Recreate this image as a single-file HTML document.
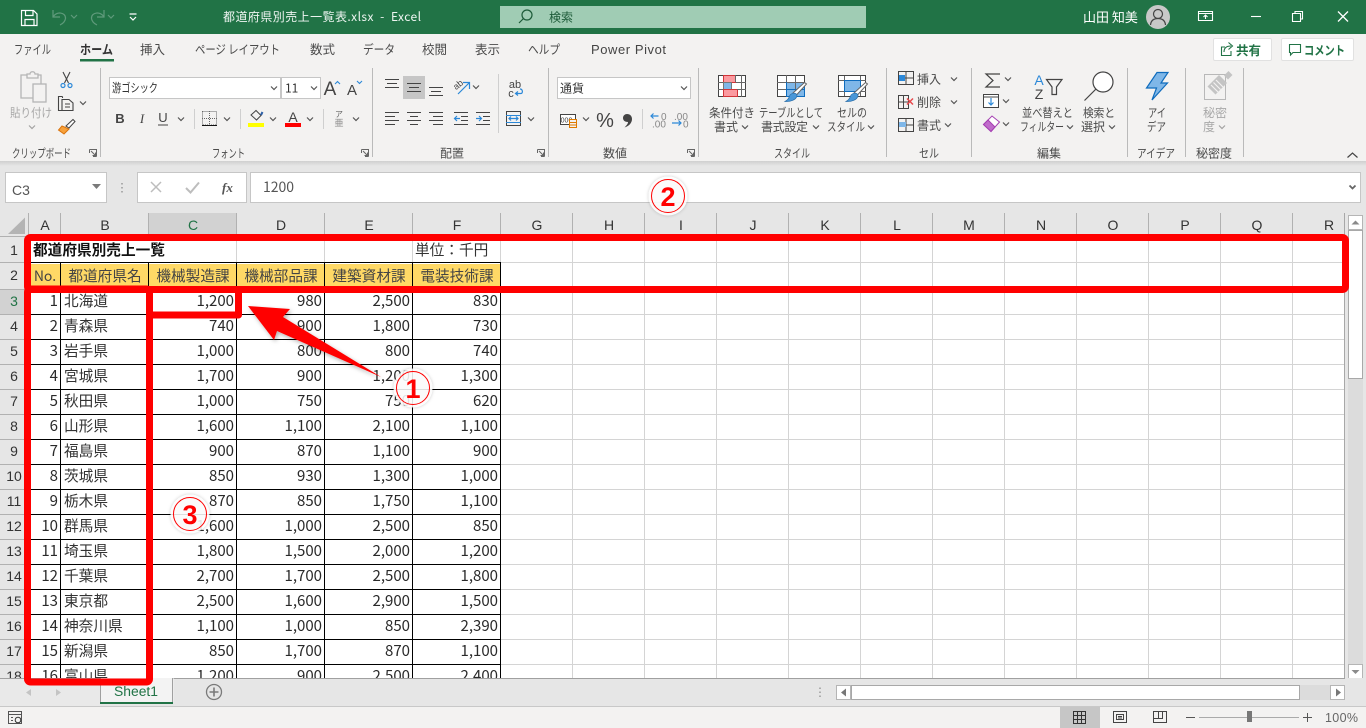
<!DOCTYPE html>
<html lang="ja"><head><meta charset="utf-8"><title>都道府県別売上一覧表.xlsx - Excel</title>
<style>
html,body{margin:0;padding:0;width:1366px;height:728px;overflow:hidden;background:#e6e6e6}
svg{position:absolute;left:0;top:0;display:block}
text{font-family:"Noto Sans CJK JP","Liberation Sans",sans-serif}
.u{font-size:12px;fill:#4a4a4a}
.g{font-size:12px;fill:#a8a8a8}
.tab{font-size:12.5px;fill:#4a4a4a}
.c{font-size:14.67px;fill:#333}
.n{font-size:15px;fill:#2a2a2a;text-anchor:end}
.h{font-size:14.67px;fill:#444;text-anchor:middle}
.ch{font-size:14px;fill:#333;text-anchor:middle;font-family:"Liberation Sans",sans-serif}
.i{fill:none;stroke:#444;stroke-width:1.1}
.cv{fill:none;stroke:#555;stroke-width:1.2}
.bl{fill:none;stroke:#2b88d8;stroke-width:1.2}
.crisp{shape-rendering:crispEdges}
</style></head><body>
<svg width="1366" height="728" viewBox="0 0 1366 728" xmlns="http://www.w3.org/2000/svg">
<defs>
<path id="v" class="cv" d="M-3-1.5 0 1.5 3-1.5"/>
<filter id="sh" x="-20%" y="-20%" width="150%" height="150%"><feDropShadow dx="1.5" dy="2" stdDeviation="2" flood-color="#000" flood-opacity=".3"/></filter>
<filter id="gl" x="-30%" y="-30%" width="160%" height="160%"><feDropShadow dx="0" dy="0" stdDeviation="1.500" flood-color="#000" flood-opacity=".25"/></filter>
<linearGradient id="rs" x1="0" y1="0" x2="0" y2="1"><stop offset="0" stop-color="#cfcfcf"/><stop offset="1" stop-color="#e6e6e6"/></linearGradient>
</defs>

<!-- base -->
<rect width="1366" height="728" fill="#e6e6e6"/>
<!-- title bar -->
<rect width="1366" height="34" fill="#217346"/>
<g fill="none" stroke="#fff" stroke-width="1.2">
<path d="M21.5 10.5H33.5L37 14V25.5H21.5Z"/><path d="M25.5 10.5V15.5H33V10.5M25 25.5V19.5H34V25.5"/>
</g>
<g fill="none" stroke="#5f9a7b" stroke-width="1.2">
<path d="M53 10V17H60M53 17C56 11 66 12 65.500 18.500C65 22 62 24 60 25"/>
<path d="M71 15 74 18 77 15"/>
<path d="M104 10V17H97M104 17C101 11 91 12 91.500 18.500C92 22 95 24 97 25"/>
<path d="M108 15 111 18 114 15"/>
</g>
<path d="M129.500 14H136.500M130 17 133 20 136 17" fill="none" stroke="#fff" stroke-width="1.2"/>
<text x="223" y="21" font-size="12" fill="#eef5f1" textLength="198" lengthAdjust="spacing" xml:space="preserve">都道府県別売上一覧表.xlsx  -  Excel</text>
<rect x="500" y="6" width="366" height="22" fill="#a0ccb4"/>
<g fill="none" stroke="#1c5a38" stroke-width="1.2"><circle cx="527" cy="15" r="5"/><path d="M523.500 18.500 519 23"/></g>
<text x="549" y="21.500" font-size="12" fill="#1c5a38">検索</text>
<text x="1083" y="22" font-size="13" fill="#fff">山田 知美</text>
<circle cx="1158" cy="17" r="12" fill="#c8c8c8"/>
<g fill="none" stroke="#444" stroke-width="1.200"><circle cx="1158" cy="14" r="4.500"/><path d="M1150.500 25C1151 20 1154 18.500 1158 18.500S1165 20 1165.500 25"/></g>
<g fill="none" stroke="#fff" stroke-width="1.100">
<path d="M1198.500 11.500H1212.500V20.500H1198.500ZM1198.500 13.500H1212.500M1205.500 19V15M1203.500 17 1205.500 15 1207.500 17"/>
<path d="M1246 16.500H1256" transform="translate(5 0)"/>
<path d="M1292.500 13.500H1300.500V21.500H1292.500ZM1295 13V11.500H1302.500V19H1300.500"/>
<path d="M1338 11.500 1348 21.500M1348 11.500 1338 21.500" stroke-width="1.300"/>
</g>

<!-- ribbon -->
<rect y="34" width="1366" height="127" fill="#f3f2f1"/>
<rect y="161" width="1366" height="5" fill="url(#rs)"/>
<g class="tab">
<text class="tab" x="14" y="54" textLength="37" lengthAdjust="spacingAndGlyphs">ファイル</text>
<text x="80" y="54" font-size="12.500" font-weight="700" fill="#333" textLength="33" lengthAdjust="spacingAndGlyphs">ホーム</text>
<text class="tab" x="140" y="54">挿入</text>
<text class="tab" x="195" y="54" textLength="85" lengthAdjust="spacingAndGlyphs">ページ レイアウト</text>
<text class="tab" x="310" y="54">数式</text>
<text class="tab" x="363" y="54" textLength="32" lengthAdjust="spacingAndGlyphs">データ</text>
<text class="tab" x="422" y="54">校閲</text>
<text class="tab" x="475" y="54">表示</text>
<text class="tab" x="528" y="54" textLength="32" lengthAdjust="spacingAndGlyphs">ヘルプ</text>
<text x="591" y="54" font-size="13" fill="#444" style="font-family:'Liberation Sans',sans-serif" textLength="75">Power Pivot</text>
</g>
<rect x="80" y="59" width="34" height="2.500" fill="#217346"/>
<!-- share/comment -->
<rect x="1213.500" y="38.500" width="58" height="22" rx="1.500" fill="#fff" stroke="#e1e1e1"/>
<rect x="1281.500" y="38.500" width="72" height="22" rx="1.500" fill="#fff" stroke="#e1e1e1"/>
<g fill="none" stroke="#217346" stroke-width="1.100">
<path d="M1225 47H1221.500V55.500H1231V51M1224 52C1224 47.500 1227 46 1231 46M1228.500 42.500 1232.500 46 1228.500 49.500"/>
<path d="M1289.500 44.500H1300.500V52.500H1293L1290.500 55V52.500H1289.500Z"/>
</g>
<text x="1236" y="55" font-size="12.500" font-weight="700" fill="#217346">共有</text>
<text x="1304" y="55" font-size="12.500" font-weight="700" fill="#217346" textLength="41" lengthAdjust="spacingAndGlyphs">コメント</text>

<!-- ribbon separators -->
<path class="crisp" d="M100.500 68V157M372.500 68V157M548.500 68V157M698.500 68V157M886.500 68V157M971.500 68V157M1127.500 68V157M1185.500 68V157M1243.500 68V157" stroke="#bababa" fill="none"/>
<path class="crisp" d="M194.500 109V129M240.500 109V129M323.500 109V129M498.500 74V133M642.500 109V129" stroke="#cfcfcf" fill="none"/>

<!-- group labels -->
<text class="u" x="12" y="157.500" textLength="59" lengthAdjust="spacingAndGlyphs">クリップボード</text>
<text class="u" x="212" y="157.500" textLength="33" lengthAdjust="spacingAndGlyphs">フォント</text>
<text class="u" x="440" y="157.500">配置</text>
<text class="u" x="603" y="157.500">数値</text>
<text class="u" x="774" y="157.500" textLength="36" lengthAdjust="spacingAndGlyphs">スタイル</text>
<text class="u" x="919" y="157.500" textLength="20" lengthAdjust="spacingAndGlyphs">セル</text>
<text class="u" x="1037" y="157.500">編集</text>
<text class="u" x="1137" y="157.500" textLength="38" lengthAdjust="spacingAndGlyphs">アイデア</text>
<text class="u" x="1196" y="157.500">秘密度</text>
<g fill="none" stroke="#666" stroke-width="1">
<path id="dl" d="M89.500 149.500H96.500V156.500M89.500 149.500V153M93 156.500H96.500M91 151 95.500 155.500M95.500 152.500V155.500H92.500"/>
<use href="#dl" x="272"/><use href="#dl" x="448"/><use href="#dl" x="598"/>
</g>

<!-- clipboard -->
<g fill="none" stroke="#b5b5b5" stroke-width="1.300">
<path d="M38 75H41V98H21V75H27"/><path d="M27 76V74H30C30 71 35 71 35 74H38V78H27Z"/>
<rect x="33" y="84" width="13" height="18" fill="#f3f2f1"/>
</g>
<text class="g" x="10" y="117" textLength="42" lengthAdjust="spacingAndGlyphs">貼り付け</text>
<use href="#v" x="32" y="127" style="opacity:.5"/>
<g fill="none" stroke="#444" stroke-width="1.100"><path d="M63 72 68.500 83M70 72 64.500 83"/></g>
<g fill="none" stroke="#2b88d8" stroke-width="1.200"><circle cx="63" cy="85.500" r="2"/><circle cx="70" cy="85.500" r="2"/></g>
<g class="i"><path class="i" d="M62.500 96.500H58.500V110.500H62M62.500 96.500V98M62 99.500H69L73 103V110.500H62Z"/><path class="i" d="M65 104H70M65 107H70"/></g>
<use href="#v" x="83" y="103"/>
<path d="M62 126 58.500 130 64 134 69 129Z" fill="#f7a13b" stroke="#d9730d"/><path d="M66 126 73 119.500 75 121.500 69 128Z" fill="#fff" stroke="#444"/>

<!-- font -->
<rect x="109.500" y="77.500" width="171" height="21" fill="#fff" stroke="#c6c6c6"/>
<rect x="281.500" y="77.500" width="39" height="21" fill="#fff" stroke="#c6c6c6"/>
<text x="112" y="92" font-size="12" fill="#333" textLength="46" lengthAdjust="spacingAndGlyphs">游ゴシック</text>
<text x="285" y="92.500" font-size="12" fill="#333">11</text>
<use href="#v" x="274" y="88"/><use href="#v" x="314" y="88"/>
<text x="330" y="95" font-size="19" fill="#444" text-anchor="middle" style="font-family:'Liberation Sans',sans-serif">A</text>
<text x="352" y="95" font-size="15" fill="#444" text-anchor="middle" style="font-family:'Liberation Sans',sans-serif">A</text>
<path d="M335 84 337.500 81.500 340 84M357 81 359.500 83.500 362 81" fill="none" stroke="#2b88d8" stroke-width="1.100"/>
<text x="120" y="123" font-size="13" font-weight="700" fill="#444" text-anchor="middle" style="font-family:'Liberation Sans',sans-serif">B</text>
<text x="142" y="123" font-size="13" font-style="italic" fill="#444" text-anchor="middle" style="font-family:'Liberation Serif',serif">I</text>
<text x="163" y="122" font-size="13" fill="#444" text-anchor="middle" style="font-family:'Liberation Sans',sans-serif">U</text>
<path d="M158 125H168" stroke="#444" fill="none"/>
<use href="#v" x="181" y="119"/>
<path class="crisp" d="M202.500 111.500H216.500V125H202.500ZM209.500 111V125M202 118.500H217" fill="none" stroke="#666" stroke-dasharray="1 1"/>
<path class="crisp" d="M202 125.500H217" stroke="#111" fill="none"/>
<use href="#v" x="227" y="119"/>
<path d="M251 115 256 110.500 261 115.500 256.500 120Z" fill="none" stroke="#444"/><path d="M261 115 262.500 112" stroke="#2b5fa8" stroke-width="2" fill="none"/>
<rect x="248" y="123" width="16" height="4" fill="#ff0"/>
<use href="#v" x="273" y="119"/>
<text x="293" y="122" font-size="14" fill="#444" text-anchor="middle" style="font-family:'Liberation Sans',sans-serif">A</text>
<rect x="285" y="123" width="16" height="4" fill="#f00"/>
<use href="#v" x="310" y="119"/>
<text x="339" y="117" font-size="8" fill="#666" text-anchor="middle">ア</text>
<text x="339" y="126" font-size="9" fill="#888" text-anchor="middle">亜</text>
<use href="#v" x="356" y="119"/>

<!-- alignment -->
<rect x="403" y="76" width="22" height="23" fill="#c6c6c6"/>
<path class="crisp" d="M385 79.500H399M387 83.500H397M385 87.500H399
M407 83.500H421M409 87.500H419M407 91.500H421
M429 87.500H443M431 91.500H441M429 95.500H443
M385 112.500H399M385 116.500H395M385 120.500H399M385 124.500H395
M407 112.500H421M410 116.500H418M407 120.500H421M410 124.500H418
M429 112.500H443M433 116.500H443M429 120.500H443M433 124.500H443
M461 116.500H468M461 120.500H468M454 112.500H468M454 124.500H468
M483 116.500H490M483 120.500H490M476 112.500H490M476 124.500H490" fill="none" stroke="#444"/>
<path d="M460 118.500H454.500M457 116 454.500 118.500 457 121M476 118.500H481.500M479 116 481.500 118.500 479 121" class="bl"/>
<path d="M469 83 458 94M463 82.500H469.500V89" class="bl"/>
<text x="460" y="87" font-size="9" fill="#444" text-anchor="middle" transform="rotate(-40 460 87)" style="font-family:'Liberation Sans',sans-serif">ab</text>
<use href="#v" x="476" y="87"/>
<text x="515" y="88" font-size="11" fill="#444" text-anchor="middle" style="font-family:'Liberation Sans',sans-serif">ab</text>
<text x="511" y="97" font-size="11" fill="#444" text-anchor="middle" style="font-family:'Liberation Sans',sans-serif">c</text>
<path d="M516 93.500H521C523 93.500 523 89 520 89M518 91.500 515.500 93.500 518 95.500" class="bl"/>
<rect x="506.500" y="111.500" width="14" height="14" fill="none" stroke="#444"/>
<path class="crisp" d="M506 115.500H521M506 122.500H521" stroke="#2b88d8" fill="none"/>
<path d="M509 118.500H518M511 116.500 509 118.500 511 120.500M516 116.500 518 118.500 516 120.500" class="bl" stroke-width="1"/>
<use href="#v" x="531" y="119"/>

<!-- number -->
<rect x="557.500" y="77.500" width="133" height="21" fill="#fff" stroke="#c6c6c6"/>
<text x="560" y="92.500" font-size="12" fill="#333">通貨</text>
<use href="#v" x="684" y="88"/>
<rect x="560.500" y="114.500" width="15" height="10" fill="#fff" stroke="#444"/>
<text x="566.500" y="122.500" font-size="7" fill="#444" text-anchor="middle" style="font-family:'Liberation Sans',sans-serif">000</text>
<path d="M569.500 119.500H576.500V127.500H569.500Z M569.500 122.500H576.500 M569.500 125H576.500" fill="#f3f2f1" stroke="#e07b00"/>
<use href="#v" x="586" y="119"/>
<text x="605" y="127" font-size="20" fill="#444" text-anchor="middle" style="font-family:'Liberation Sans',sans-serif">%</text>
<path d="M627 114C630 114 632 116 632 119 632 123 629 126 624.500 127.500 627 125 628 123.500 628 122 625 122 623 120.500 623 118 623 115.500 625 114 627 114Z" fill="#444"/>
<text x="661" y="120" font-size="10" fill="#888" style="font-family:'Liberation Sans',sans-serif">0</text>
<text x="652" y="127.500" font-size="10" fill="#888" style="font-family:'Liberation Sans',sans-serif">.00</text>
<path d="M658.500 116H651M653.500 113.500 651 116 653.500 118.500" class="bl"/>
<text x="674" y="120" font-size="10" fill="#888" style="font-family:'Liberation Sans',sans-serif">.00</text>
<text x="683" y="127.500" font-size="10" fill="#888" style="font-family:'Liberation Sans',sans-serif">0</text>
<path d="M672 123H681M678.500 120.500 681 123 678.500 125.500" class="bl"/>

<!-- styles -->
<g class="crisp">
<rect x="718.500" y="75.500" width="27" height="21" fill="#fff" stroke="#444"/>
<rect x="723.500" y="75.500" width="12" height="7" fill="#fb9aa0" stroke="#d13438"/>
<rect x="723.500" y="82.500" width="8" height="7" fill="#7fb7e8" stroke="#777"/>
<rect x="723.500" y="89.500" width="14" height="7" fill="#fb9aa0" stroke="#d13438"/>
<path d="M735.500 75V82M741.500 75V97M718 82.500H723M718 89.500H723M736 82.500H746M737 89.500H746" stroke="#666" fill="none"/>
<rect x="777.500" y="75.500" width="27" height="21" fill="#fff" stroke="#444"/>
<rect x="786" y="82" width="19" height="15" fill="#7fb7e8"/>
<path d="M786.500 75V82M795.500 75V97M777 82.500H805M777 89.500H786" stroke="#666" fill="none"/>
<path d="M786 89.500H805M786.500 82V97M786 96.500H805M804.500 82V97" stroke="#0f6cbd" fill="none"/>
<rect x="838.500" y="75.500" width="27" height="21" fill="#fff" stroke="#444"/>
<path d="M838 80.500H866M844.500 76V96M838 91.500H866M860.500 76V96" stroke="#666" fill="none"/>
<rect x="844.500" y="80.500" width="16" height="11" fill="#7fb7e8" stroke="#0f6cbd"/>
</g>
<g fill="#fff" stroke="#666" stroke-width="1">
<path d="M793 93 804.500 82.500 806.500 84 796 95.500Z"/><path d="M854 93 865.500 82.500 867.500 84 857 95.500Z"/>
</g>
<path d="M790 95C793 92 797 93 797 96 796 100 790 102 785 101.500 788 100 789 98 790 95ZM851 95C854 92 858 93 858 96 857 100 851 102 846 101.500 849 100 850 98 851 95Z" fill="#4a97d8" stroke="#2b6ea8" stroke-width=".700"/>
<text class="u" x="709" y="117" textLength="46" lengthAdjust="spacingAndGlyphs">条件付き</text>
<text class="u" x="714" y="131">書式</text><use href="#v" x="745" y="127"/>
<text class="u" x="759" y="117" textLength="64" lengthAdjust="spacingAndGlyphs">テーブルとして</text>
<text class="u" x="761" y="131" textLength="47">書式設定</text><use href="#v" x="816" y="127"/>
<text class="u" x="837" y="117" textLength="30" lengthAdjust="spacingAndGlyphs">セルの</text>
<text class="u" x="827" y="131" textLength="38" lengthAdjust="spacingAndGlyphs">スタイル</text><use href="#v" x="871" y="127"/>

<!-- cells -->
<g class="crisp" fill="none">
<path d="M898.500 71.500H913.500V84.500H898.500ZM898.500 78H913.500M906 71V85" stroke="#444"/>
<rect x="899" y="75" width="6" height="6" fill="#2b88d8"/>
<path d="M898.500 95.500H908.500V108.500H898.500ZM903.500 95V109M898 102H908" stroke="#444"/>
<path d="M898.500 118.500H913.500V131.500H898.500ZM898 125H914M906 118V132" stroke="#444"/>
<rect x="899" y="122" width="7" height="5" fill="#7fb7e8"/>
</g>
<path d="M907 98.500 913 104.500M913 98.500 907 104.500" stroke="#e8484c" stroke-width="1.500" fill="none"/>
<text class="u" x="917" y="83.500">挿入</text><use href="#v" x="954" y="79"/>
<text class="u" x="917" y="106.500">削除</text><use href="#v" x="954" y="102"/>
<text class="u" x="917" y="129.500">書式</text><use href="#v" x="948" y="125"/>

<!-- editing -->
<path d="M1000 74H986L993 80.500 986 87H1000" fill="none" stroke="#444" stroke-width="1.200"/>
<use href="#v" x="1008" y="79"/>
<rect x="983.500" y="94.500" width="15" height="13" fill="#fff" stroke="#444"/>
<path d="M983 97H999" stroke="#444"/>
<path d="M991 98V105M988.500 102.500 991 105 993.500 102.500" class="bl"/>
<use href="#v" x="1006" y="101"/>
<path d="M983.500 124.500 992 116 999.500 122 991 131.500Z" fill="#fff" stroke="#a53fb2"/>
<path d="M983.500 124.500 988 120 995 127 991 131.500Z" fill="#c06ccb" stroke="#a53fb2"/>
<use href="#v" x="1006" y="124"/>
<text x="1039" y="85" font-size="14" fill="#2b88d8" text-anchor="middle" style="font-family:'Liberation Sans',sans-serif">A</text>
<text x="1039" y="99" font-size="14" fill="#444" text-anchor="middle" style="font-family:'Liberation Sans',sans-serif">Z</text>
<path d="M1046.500 79.500H1062L1056.500 87V94.500H1052V87Z" fill="none" stroke="#444" stroke-width="1.200"/>
<circle cx="1103" cy="82" r="10" fill="#fff" stroke="#444" stroke-width="1.200"/><path d="M1096 89 1084.500 100.500" stroke="#444" stroke-width="1.200"/>
<text class="u" x="1022" y="117" textLength="51" lengthAdjust="spacingAndGlyphs">並べ替えと</text>
<text class="u" x="1020" y="131" textLength="44" lengthAdjust="spacingAndGlyphs">フィルター</text><use href="#v" x="1070" y="127"/>
<text class="u" x="1083" y="117" textLength="32" lengthAdjust="spacingAndGlyphs">検索と</text>
<text class="u" x="1081" y="131">選択</text><use href="#v" x="1112" y="127"/>

<!-- ideas / sensitivity -->
<path d="M1157 72.500H1168L1161 83H1167.500L1152 100 1156.500 88H1146.500Z" fill="#7fb7e8" stroke="#0f6cbd" stroke-width="1.200"/>
<text class="u" x="1148" y="117" textLength="18" lengthAdjust="spacingAndGlyphs">アイ</text>
<text class="u" x="1147" y="131" textLength="19" lengthAdjust="spacingAndGlyphs">デア</text>
<rect x="1204.500" y="74.500" width="21" height="25" fill="#f3f2f1" stroke="#b8b8b8"/>
<path d="M1207.500 86.500 1219 75 1227 83 1215.500 94.500Z" fill="#c4c4c4"/>
<path d="M1211 85 1218 92M1213.500 82.500 1220.500 89.500M1216 80 1223 87" stroke="#f3f2f1" stroke-width="1.200" fill="none"/>
<path d="M1224 75.500 1228.500 71 1232.500 75 1228 79.500Z" fill="#c4c4c4"/>
<text class="g" x="1203" y="117">秘密</text><text class="g" x="1203" y="131">度</text><use href="#v" x="1222" y="127" style="opacity:.5"/>
<path d="M1347.500 157.500 1352.500 153 1357.500 157.500" fill="none" stroke="#444" stroke-width="1.200"/>

<!-- formula bar -->
<rect x="5.500" y="172.500" width="101" height="30" fill="#fff" stroke="#c6c6c6"/>
<text x="12" y="195" font-size="14" fill="#555" style="font-family:'Liberation Sans',sans-serif">C3</text>
<path d="M92 184H101L96.500 189Z" fill="#7a7a7a"/>
<path d="M122 183V184.500M122 187V188.500M122 191V192.500" stroke="#999" stroke-width="1.500"/>
<rect x="137.500" y="172.500" width="109" height="30" fill="#fff" stroke="#c6c6c6"/>
<path d="M151 182 161 192M161 182 151 192" stroke="#bdbdbd" stroke-width="1.500" fill="none"/>
<path d="M186 188 190.500 192.500 199 182.500" stroke="#bdbdbd" stroke-width="2" fill="none"/>
<text x="222" y="192" font-size="13" font-style="italic" font-weight="700" fill="#555" style="font-family:'Liberation Serif',serif">fx</text>
<rect x="250.500" y="172.500" width="1110" height="30" fill="#fff" stroke="#c6c6c6"/>
<text x="263" y="192" font-size="14" fill="#555" style="font-family:'Noto Sans CJK JP',sans-serif">1200</text>
<path d="M1349.500 185.500 1352.500 188.500 1355.500 185.500" fill="none" stroke="#666" stroke-width="1.800"/>

<!-- column headers -->
<rect x="149" y="213" width="88" height="24" fill="#d2d2d2"/>
<path d="M8 234 25 217.500V234Z" fill="#b4b4b4"/>
<path class="crisp" d="M28.500 213V237M60.500 213V237M148.500 213V237M236.500 213V237M324.500 213V237M412.500 213V237M500.500 213V237M572.500 213V237M644.500 213V237M716.500 213V237M788.500 213V237M860.500 213V237M932.500 213V237M1004.500 213V237M1076.500 213V237M1148.500 213V237M1220.500 213V237M1292.500 213V237" stroke="#b1b1b1" fill="none"/>
<g>
<text class="ch" x="45" y="230">A</text><text class="ch" x="105" y="230">B</text><text class="ch" x="193" y="230" style="fill:#217346">C</text><text class="ch" x="281" y="230">D</text><text class="ch" x="369" y="230">E</text><text class="ch" x="457" y="230">F</text><text class="ch" x="537" y="230">G</text><text class="ch" x="609" y="230">H</text><text class="ch" x="681" y="230">I</text><text class="ch" x="753" y="230">J</text><text class="ch" x="825" y="230">K</text><text class="ch" x="897" y="230">L</text><text class="ch" x="969" y="230">M</text><text class="ch" x="1041" y="230">N</text><text class="ch" x="1113" y="230">O</text><text class="ch" x="1185" y="230">P</text><text class="ch" x="1257" y="230">Q</text><text class="ch" x="1329" y="230">R</text>
</g>

<!-- sheet -->
<rect x="29" y="237" width="1315" height="441" fill="#fff"/>
<rect x="29" y="264" width="472" height="25" fill="#ffd966"/>
<rect x="0" y="290" width="29" height="24" fill="#d2d2d2"/>
<path class="crisp" d="M0 236.500H29M0 262.500H29M0 289.500H29M0 314.500H29M0 339.500H29M0 364.500H29M0 389.500H29M0 414.500H29M0 439.500H29M0 464.500H29M0 489.500H29M0 514.500H29M0 539.500H29M0 564.500H29M0 589.500H29M0 614.500H29M0 639.500H29M0 664.500H29" stroke="#b1b1b1" fill="none"/>
<path class="crisp" d="M28.500 237V678" stroke="#b1b1b1" fill="none"/>
<path class="crisp" d="M501 262.500H1344M501 289.500H1344M501 314.500H1344M501 339.500H1344M501 364.500H1344M501 389.500H1344M501 414.500H1344M501 439.500H1344M501 464.500H1344M501 489.500H1344M501 514.500H1344M501 539.500H1344M501 564.500H1344M501 589.500H1344M501 614.500H1344M501 639.500H1344M501 664.500H1344
M572.500 237V678M644.500 237V678M716.500 237V678M788.500 237V678M860.500 237V678M932.500 237V678M1004.500 237V678M1076.500 237V678M1148.500 237V678M1220.500 237V678M1292.500 237V678
M236.500 237V262M324.500 237V262M412.500 237V262M500.500 237V262" stroke="#d4d4d4" fill="none"/>
<path class="crisp" d="M29 262.500H501M29 289.500H501M29 314.500H501M29 339.500H501M29 364.500H501M29 389.500H501M29 414.500H501M29 439.500H501M29 464.500H501M29 489.500H501M29 514.500H501M29 539.500H501M29 564.500H501M29 589.500H501M29 614.500H501M29 639.500H501M29 664.500H501
M60.500 262V678M148.500 262V678M236.500 262V678M324.500 262V678M412.500 262V678M500.500 262V678" stroke="#000" fill="none"/>

<!-- row numbers -->
<g>
<text class="ch" x="14" y="255">1</text><text class="ch" x="14" y="280">2</text><text class="ch" x="14" y="306" style="fill:#217346">3</text><text class="ch" x="14" y="331">4</text><text class="ch" x="14" y="356">5</text><text class="ch" x="14" y="381">6</text><text class="ch" x="14" y="406">7</text><text class="ch" x="14" y="431">8</text><text class="ch" x="14" y="456">9</text><text class="ch" x="14" y="481">10</text><text class="ch" x="14" y="506">11</text><text class="ch" x="14" y="531">12</text><text class="ch" x="14" y="556">13</text><text class="ch" x="14" y="581">14</text><text class="ch" x="14" y="606">15</text><text class="ch" x="14" y="631">16</text><text class="ch" x="14" y="656">17</text><text class="ch" x="14" y="681">18</text>
</g>

<!-- cell text -->
<text class="c" x="33" y="255" font-weight="700" style="fill:#111">都道府県別売上一覧</text>
<text class="c" x="415" y="255">単位：千円</text>
<text class="h" x="45" y="281" style="font-size:14px">No.</text><text class="h" x="105" y="281">都道府県名</text><text class="h" x="193" y="281">機械製造課</text><text class="h" x="281" y="281">機械部品課</text><text class="h" x="369" y="281">建築資材課</text><text class="h" x="457" y="281">電装技術課</text>

<text class="n" x="58" y="306">1</text><text class="c" x="64" y="306">北海道</text><text class="n" x="234" y="306">1,200</text><text class="n" x="322" y="306">980</text><text class="n" x="410" y="306">2,500</text><text class="n" x="498" y="306">830</text>
<text class="n" x="58" y="331">2</text><text class="c" x="64" y="331">青森県</text><text class="n" x="234" y="331">740</text><text class="n" x="322" y="331">900</text><text class="n" x="410" y="331">1,800</text><text class="n" x="498" y="331">730</text>
<text class="n" x="58" y="356">3</text><text class="c" x="64" y="356">岩手県</text><text class="n" x="234" y="356">1,000</text><text class="n" x="322" y="356">800</text><text class="n" x="410" y="356">800</text><text class="n" x="498" y="356">740</text>
<text class="n" x="58" y="381">4</text><text class="c" x="64" y="381">宮城県</text><text class="n" x="234" y="381">1,700</text><text class="n" x="322" y="381">900</text><text class="n" x="410" y="381">1,200</text><text class="n" x="498" y="381">1,300</text>
<text class="n" x="58" y="406">5</text><text class="c" x="64" y="406">秋田県</text><text class="n" x="234" y="406">1,000</text><text class="n" x="322" y="406">750</text><text class="n" x="410" y="406">750</text><text class="n" x="498" y="406">620</text>
<text class="n" x="58" y="431">6</text><text class="c" x="64" y="431">山形県</text><text class="n" x="234" y="431">1,600</text><text class="n" x="322" y="431">1,100</text><text class="n" x="410" y="431">2,100</text><text class="n" x="498" y="431">1,100</text>
<text class="n" x="58" y="456">7</text><text class="c" x="64" y="456">福島県</text><text class="n" x="234" y="456">900</text><text class="n" x="322" y="456">870</text><text class="n" x="410" y="456">1,100</text><text class="n" x="498" y="456">900</text>
<text class="n" x="58" y="481">8</text><text class="c" x="64" y="481">茨城県</text><text class="n" x="234" y="481">850</text><text class="n" x="322" y="481">930</text><text class="n" x="410" y="481">1,300</text><text class="n" x="498" y="481">1,000</text>
<text class="n" x="58" y="506">9</text><text class="c" x="64" y="506">栃木県</text><text class="n" x="234" y="506">870</text><text class="n" x="322" y="506">850</text><text class="n" x="410" y="506">1,750</text><text class="n" x="498" y="506">1,100</text>
<text class="n" x="58" y="531">10</text><text class="c" x="64" y="531">群馬県</text><text class="n" x="234" y="531">1,600</text><text class="n" x="322" y="531">1,000</text><text class="n" x="410" y="531">2,500</text><text class="n" x="498" y="531">850</text>
<text class="n" x="58" y="556">11</text><text class="c" x="64" y="556">埼玉県</text><text class="n" x="234" y="556">1,800</text><text class="n" x="322" y="556">1,500</text><text class="n" x="410" y="556">2,000</text><text class="n" x="498" y="556">1,200</text>
<text class="n" x="58" y="581">12</text><text class="c" x="64" y="581">千葉県</text><text class="n" x="234" y="581">2,700</text><text class="n" x="322" y="581">1,700</text><text class="n" x="410" y="581">2,500</text><text class="n" x="498" y="581">1,800</text>
<text class="n" x="58" y="606">13</text><text class="c" x="64" y="606">東京都</text><text class="n" x="234" y="606">2,500</text><text class="n" x="322" y="606">1,600</text><text class="n" x="410" y="606">2,900</text><text class="n" x="498" y="606">1,500</text>
<text class="n" x="58" y="631">14</text><text class="c" x="64" y="631">神奈川県</text><text class="n" x="234" y="631">1,100</text><text class="n" x="322" y="631">1,000</text><text class="n" x="410" y="631">850</text><text class="n" x="498" y="631">2,390</text>
<text class="n" x="58" y="656">15</text><text class="c" x="64" y="656">新潟県</text><text class="n" x="234" y="656">850</text><text class="n" x="322" y="656">1,700</text><text class="n" x="410" y="656">870</text><text class="n" x="498" y="656">1,100</text>
<text class="n" x="58" y="681">16</text><text class="c" x="64" y="681">富山県</text><text class="n" x="234" y="681">1,200</text><text class="n" x="322" y="681">900</text><text class="n" x="410" y="681">2,500</text><text class="n" x="498" y="681">2,400</text>

<!-- right/vertical scroll -->
<rect x="1344" y="213" width="22" height="493" fill="#e6e6e6"/>
<path class="crisp" d="M1344.500 213V678" stroke="#a8a8a8" fill="none"/>
<rect x="1348" y="215" width="15" height="463" fill="#dcdcdc"/>
<rect x="1348.500" y="215.500" width="14" height="14" fill="#fff" stroke="#b5b5b5"/>
<path d="M1351.500 224.500H1359.500L1355.500 220.500Z" fill="#8a8a8a"/>
<rect x="1348.500" y="230.500" width="14" height="148" fill="#fff" stroke="#a8a8a8"/>
<rect x="1348.500" y="664.500" width="14" height="14" fill="#fff" stroke="#b5b5b5"/>
<path d="M1351.500 670H1359.500L1355.500 674Z" fill="#8a8a8a"/>

<!-- bottom bar -->
<rect x="0" y="678" width="1366" height="29" fill="#e6e6e6"/>
<rect x="0" y="678" width="100" height="28" fill="#e9e9e9"/>
<path class="crisp" d="M0 678.500H1345" stroke="#a0a0a0" fill="none"/>
<path d="M31 689 26 692.500 31 696Z" fill="#c4c4c4"/>
<path d="M56 689 61 692.500 56 696Z" fill="#c4c4c4"/>
<rect x="100.500" y="678" width="73" height="24" fill="#f3f3f3"/>
<path class="crisp" d="M100.500 678V703M172.500 678V703" stroke="#a0a0a0" fill="none"/>
<rect x="100" y="702" width="73" height="2" fill="#217346"/>
<text x="114" y="696" font-size="13.500" fill="#217346" textLength="44" lengthAdjust="spacingAndGlyphs" style="font-family:'Liberation Sans',sans-serif">Sheet1</text>
<circle cx="214" cy="692" r="7.500" fill="none" stroke="#7a7a7a" stroke-width="1.300"/>
<path d="M209.500 692H218.500M214 687.500V696.500" stroke="#7a7a7a" stroke-width="1.600"/>
<path d="M820 687.500V689M820 691.500V693M820 695.500V697" stroke="#9a9a9a" stroke-width="1.500"/>
<rect x="836.500" y="685.500" width="14" height="14" fill="#fff" stroke="#b5b5b5"/>
<path d="M846 688.500V696.500L841 692.500Z" fill="#777"/>
<rect x="851" y="685" width="479" height="15" fill="#dcdcdc"/>
<rect x="851.500" y="685.500" width="448" height="14" fill="#fff" stroke="#a8a8a8"/>
<rect x="1330.500" y="685.500" width="14" height="14" fill="#fff" stroke="#b5b5b5"/>
<path d="M1336 688.500V696.500L1341 692.500Z" fill="#777"/>

<!-- status bar -->
<rect x="0" y="706" width="1366" height="22" fill="#f3f2f1"/>
<path class="crisp" d="M0 706.500H1366" stroke="#c8c8c8" fill="none"/>
<rect x="1060" y="707" width="40" height="21" fill="#c6c6c6"/>
<g fill="none" stroke="#555">
<path d="M8.500 711.500H21.500V723.500H8.500ZM8.500 714.500H21.500M11 717.500H13M11 720.500H13"/><circle cx="18" cy="720" r="2.800" stroke="#333"/>
</g>
<path class="crisp" d="M1073.500 711.500H1085.500V723.500H1073.500ZM1077.500 711V724M1081.500 711V724M1073 715.500H1086M1073 719.500H1086" fill="none" stroke="#333"/>
<path class="crisp" d="M1113.500 711.500H1126.500V722.500H1113.500ZM1116.500 714.500H1123.500V719.500H1116.500ZM1118 716.500H1122M1118 718H1122" fill="none" stroke="#444"/>
<path class="crisp" d="M1153.500 711.500H1166.500V722.500H1153.500ZM1153 718.500H1162.500V711M1158.500 711V718" fill="none" stroke="#444"/>
<path class="crisp" d="M1186 717.500H1195M1303 717.500H1312M1307.500 713V722" fill="none" stroke="#555"/>
<path class="crisp" d="M1199 717.500H1299" stroke="#aaa" fill="none"/>
<rect x="1247" y="711" width="5" height="11" fill="#777"/>
<text x="1325" y="722" font-size="12.500" fill="#666" textLength="33" style="font-family:'Liberation Sans',sans-serif">100%</text>

<!-- annotations -->
<g fill="none" stroke="#f00" stroke-width="7" stroke-linejoin="round">
<rect x="27.500" y="237.500" width="1318" height="52" rx="3"/>
<rect x="27.500" y="289" width="122" height="393" rx="3"/>
<path d="M150 315H238.500V293"/>
</g>
<path d="M248 306 290 309 283 317 381 377 277 331 274 340Z" fill="#f00" filter="url(#sh)"/>
<g text-anchor="middle">
<circle cx="413" cy="388" r="19.500" fill="#fff" fill-opacity=".85" filter="url(#gl)"/><circle cx="413" cy="388" r="16.500" fill="none" stroke="#f00" stroke-width="1"/>
<text x="413" y="398" font-size="27" font-weight="700" fill="#f00" style="font-family:'Liberation Sans',sans-serif">1</text>
<circle cx="668" cy="196" r="19.500" fill="#fff" fill-opacity=".85" filter="url(#gl)"/><circle cx="668" cy="196" r="16.500" fill="none" stroke="#f00" stroke-width="1"/>
<text x="668" y="206" font-size="27" font-weight="700" fill="#f00" style="font-family:'Liberation Sans',sans-serif">2</text>
<circle cx="190" cy="514" r="19.500" fill="#fff" fill-opacity=".85" filter="url(#gl)"/><circle cx="190" cy="514" r="16.500" fill="none" stroke="#f00" stroke-width="1"/>
<text x="190" y="524" font-size="27" font-weight="700" fill="#f00" style="font-family:'Liberation Sans',sans-serif">3</text>
</g>
</svg>
</body></html>
